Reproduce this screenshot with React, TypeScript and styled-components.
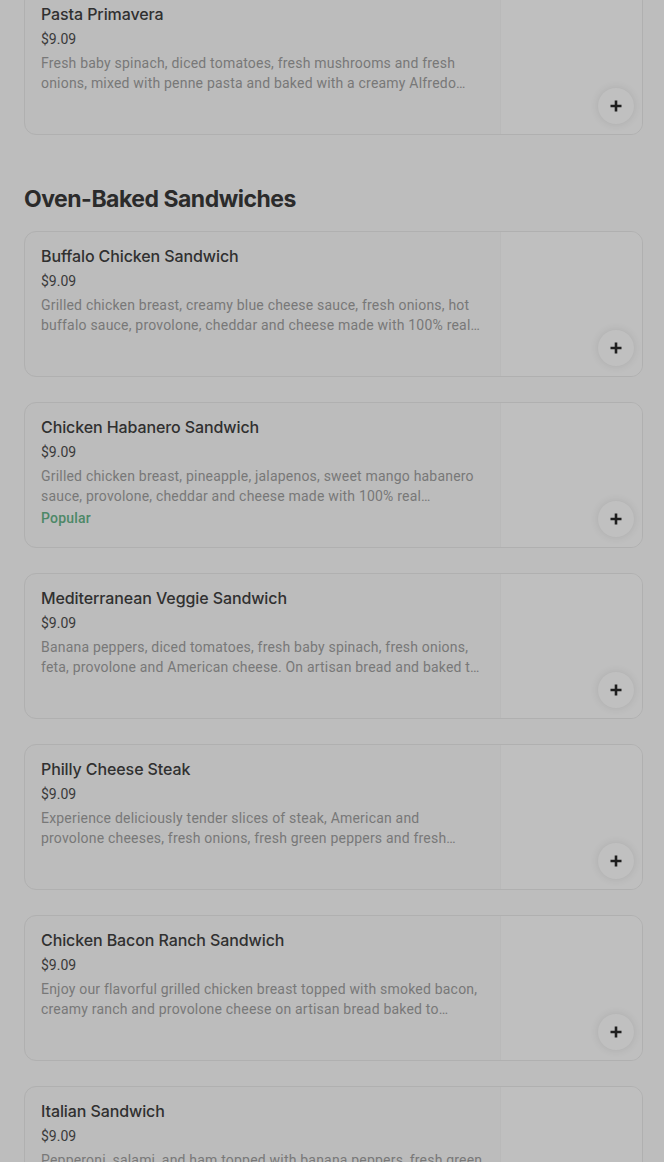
import React from 'react';
import styled, { createGlobalStyle } from 'styled-components';

interface IMenuItem {
  title: string;
  price: string;
  description: string;
  popular?: boolean;
}

const GlobalStyle = createGlobalStyle`
  html, body {
    margin: 0;
    padding: 0;
    background: #bdbdbd;
    overflow: hidden;
  }

  body {
    font-family: Roboto, "Liberation Sans", sans-serif;
    -webkit-font-smoothing: antialiased;
  }
`;

const Page = styled.div`
  width: 664px;
  height: 1162px;
  overflow: hidden;
  background: #bdbdbd;
`;

const Menu = styled.div`
  display: flex;
  flex-direction: column;
  padding: 0 21px 0 24px;
  margin-top: -11px;
`;

const Section = styled.section`
  display: flex;
  flex-direction: column;
  gap: 25px;
`;

const SectionTitle = styled.h2`
  margin: 48px 0 16px;
  font-family: Inter, "Liberation Sans", sans-serif;
  font-size: 23px;
  line-height: 32px;
  font-weight: 700;
  letter-spacing: -0.5px;
  color: #2b2b2b;
`;

const Card = styled.div`
  display: flex;
  height: 146px;
  border: 1px solid #b0b0b0;
  border-radius: 12px;
  overflow: hidden;
  background: #bcbcbc;
  box-sizing: border-box;
`;

const Info = styled.div`
  flex: 1;
  min-width: 0;
  padding: 14px 16px 16px;
  display: flex;
  flex-direction: column;
`;

const ItemTitle = styled.div`
  font-family: Inter, "Liberation Sans", sans-serif;
  font-size: 16px;
  line-height: 20px;
  font-weight: 500;
  letter-spacing: -0.1px;
  color: #303030;
`;

const Price = styled.div`
  margin-top: 5px;
  font-size: 14px;
  line-height: 20px;
  color: #3a3a3a;
`;

const Description = styled.div`
  margin-top: 4px;
  font-size: 14px;
  line-height: 20px;
  letter-spacing: 0.2px;
  color: #787878;
  display: -webkit-box;
  -webkit-line-clamp: 2;
  -webkit-box-orient: vertical;
  overflow: hidden;
`;

const Tag = styled.div`
  margin-top: 2px;
  font-size: 14px;
  line-height: 20px;
  font-weight: 500;
  letter-spacing: 0.2px;
  color: #4d8867;
`;

const Photo = styled.div`
  position: relative;
  width: 141px;
  flex: none;
  background: #bfbfbf;
  border-left: 1px solid #b9b9b9;
`;

const AddButton = styled.button`
  position: absolute;
  right: 8px;
  bottom: 10px;
  width: 36px;
  height: 36px;
  border: none;
  border-radius: 50%;
  padding: 0;
  display: flex;
  align-items: center;
  justify-content: center;
  background: #c0c0c0;
  box-shadow: 0 0 8px rgba(0, 0, 0, 0.1);
  color: #1f1f1f;
  cursor: pointer;
`;

const PlusIcon = () => (
  <svg width="14" height="14" viewBox="0 0 14 14" fill="none">
    <path d="M7 1.5v11M1.5 7h11" stroke="currentColor" strokeWidth="2.6" />
  </svg>
);

const MenuCard = ({ title, price, description, popular }: IMenuItem) => (
  <Card>
    <Info>
      <ItemTitle>{title}</ItemTitle>
      <Price>{price}</Price>
      <Description>{description}</Description>
      {popular && <Tag>Popular</Tag>}
    </Info>
    <Photo>
      <AddButton aria-label={`Add ${title}`}>
        <PlusIcon />
      </AddButton>
    </Photo>
  </Card>
);

const sandwiches: IMenuItem[] = [
  {
    title: 'Buffalo Chicken Sandwich',
    price: '$9.09',
    description:
      'Grilled chicken breast, creamy blue cheese sauce, fresh onions, hot buffalo sauce, provolone, cheddar and cheese made with 100% real mozzarella on artisan bread.',
  },
  {
    title: 'Chicken Habanero Sandwich',
    price: '$9.09',
    description:
      'Grilled chicken breast, pineapple, jalapenos, sweet mango habanero sauce, provolone, cheddar and cheese made with 100% real mozzarella on artisan bread.',
    popular: true,
  },
  {
    title: 'Mediterranean Veggie Sandwich',
    price: '$9.09',
    description:
      'Banana peppers, diced tomatoes, fresh baby spinach, fresh onions, feta, provolone and American cheese. On artisan bread and baked to perfection.',
  },
  {
    title: 'Philly Cheese Steak',
    price: '$9.09',
    description:
      'Experience deliciously tender slices of steak, American and provolone cheeses, fresh onions, fresh green peppers and fresh mushrooms on artisan bread.',
  },
  {
    title: 'Chicken Bacon Ranch Sandwich',
    price: '$9.09',
    description:
      'Enjoy our flavorful grilled chicken breast topped with smoked bacon, creamy ranch and provolone cheese on artisan bread baked to golden brown perfection.',
  },
  {
    title: 'Italian Sandwich',
    price: '$9.09',
    description:
      'Pepperoni, salami, and ham topped with banana peppers, fresh green peppers, fresh onions and provolone cheese on artisan bread.',
  },
];

const App = () => (
  <Page>
    <GlobalStyle />
    <Menu>
      <MenuCard
        title="Pasta Primavera"
        price="$9.09"
        description="Fresh baby spinach, diced tomatoes, fresh mushrooms and fresh onions, mixed with penne pasta and baked with a creamy Alfredo sauce and provolone cheese."
      />
      <SectionTitle>Oven-Baked Sandwiches</SectionTitle>
      <Section>
        {sandwiches.map((item) => (
          <MenuCard key={item.title} {...item} />
        ))}
      </Section>
    </Menu>
  </Page>
);

export default App;
